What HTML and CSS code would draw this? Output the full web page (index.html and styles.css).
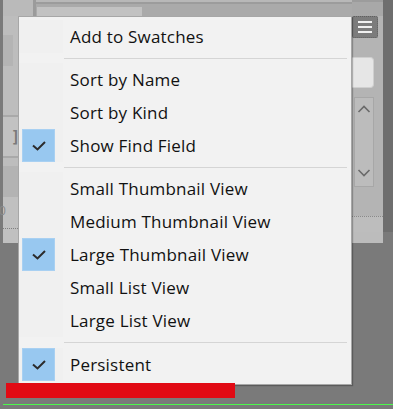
FILE: index.html
```html
<!DOCTYPE html>
<html>
<head>
<meta charset="utf-8">
<link rel="stylesheet" href="styles.css">
</head>
<body>
<div class="stage">
  <div class="backdrop">
    <div class="panel">
      <div class="panel-main">
        <div class="top">
          <div class="top-left"></div>
          <div class="top-vline"></div>
          <div class="top-right">
            <div class="topbar"></div>
            <div class="tabrow"><div class="tab"></div></div>
          </div>
        </div>
        <div class="field-row"><div class="stub"></div></div>
        <div class="list-row"><span class="bracket">]</span></div>
        <div class="grid-row"></div>
        <div class="grid-row2"></div>
        <div class="dotted"><span class="zero">0</span></div>
      </div>
      <div class="panel-side">
        <div class="side-top"></div>
        <div class="menu-btn"><span></span><span></span><span></span></div>
        <div class="search"></div>
        <div class="scroll">
          <svg class="chev" width="14" height="8" viewBox="0 0 14 8"><polyline points="1.5,7 7,1.5 12.5,7" fill="none" stroke="#6a6a6a" stroke-width="1.6"/></svg>
          <svg class="chev" width="14" height="8" viewBox="0 0 14 8"><polyline points="1.5,1 7,6.5 12.5,1" fill="none" stroke="#6a6a6a" stroke-width="1.6"/></svg>
        </div>
        <div class="side-dots"></div>
      </div>
    </div>
    <div class="edge"></div>
  </div>

  <div class="menu">
    <div class="item"><span class="gutter"></span><span class="label">Add to Swatches</span></div>
    <div class="sep"></div>
    <div class="item"><span class="gutter"></span><span class="label">Sort by Name</span></div>
    <div class="item"><span class="gutter"></span><span class="label">Sort by Kind</span></div>
    <div class="item"><span class="gutter"><span class="check"><svg width="16" height="12" viewBox="0 0 16 12"><polyline points="2,5.5 6.5,9.5 14,2" fill="none" stroke="#2b2b2b" stroke-width="2"/></svg></span></span><span class="label">Show Find Field</span></div>
    <div class="sep"></div>
    <div class="item"><span class="gutter"></span><span class="label">Small Thumbnail View</span></div>
    <div class="item"><span class="gutter"></span><span class="label">Medium Thumbnail View</span></div>
    <div class="item"><span class="gutter"><span class="check"><svg width="16" height="12" viewBox="0 0 16 12"><polyline points="2,5.5 6.5,9.5 14,2" fill="none" stroke="#2b2b2b" stroke-width="2"/></svg></span></span><span class="label">Large Thumbnail View</span></div>
    <div class="item"><span class="gutter"></span><span class="label">Small List View</span></div>
    <div class="item"><span class="gutter"></span><span class="label">Large List View</span></div>
    <div class="sep sep-last"></div>
    <div class="item"><span class="gutter"><span class="check"><svg width="16" height="12" viewBox="0 0 16 12"><polyline points="2,5.5 6.5,9.5 14,2" fill="none" stroke="#2b2b2b" stroke-width="2"/></svg></span></span><span class="label">Persistent</span></div>
  </div>

  <div class="redbar"></div>
  <div class="greenline"></div>
</div>
</body>
</html>
```
FILE: styles.css
```css
html, body {
  margin: 0;
  padding: 0;
}
body {
  background: #7a7a7a;
  font-family: "Open Sans", "Noto Sans", "Liberation Sans", sans-serif;
}
.stage {
  position: relative;
  width: 393px;
  height: 409px;
  overflow: hidden;
}
.backdrop {
  display: flex;
  height: 243px;
}
.panel {
  margin-left: 3px;
  width: 380px;
  display: flex;
  background: #bcbcbc;
}
.edge {
  flex: 1;
  background: #6e6e6e;
  height: 232px;
}
.panel-main {
  flex: 1;
  display: flex;
  flex-direction: column;
}
.top {
  display: flex;
  height: 16px;
}
.top-left {
  width: 30px;
  background: #bababa;
}
.top-vline {
  width: 3px;
  background: #9b9b9b;
}
.top-right {
  flex: 1;
  display: flex;
  flex-direction: column;
}
.topbar {
  height: 2px;
  background: #b8b8b8;
  border-bottom: 2px solid #9c9c9c;
}
.tabrow {
  flex: 1;
  display: flex;
  padding-left: 1px;
  background: #aaaaaa;
}
.tab {
  width: 105px;
  background: #c2c2c2;
  margin-top: 3px;
}
.field-row {
  height: 99px;
  background: #bdbdbd;
}
.stub {
  margin: 19px 0 0 0;
  width: 10px;
  height: 31px;
  background: #b4b4b4;
}
.list-row {
  height: 39px;
  border-top: 2px solid #a9a9a9;
  border-bottom: 2px solid #a9a9a9;
  display: flex;
  align-items: center;
  padding-left: 8px;
  background: #c2c2c2;
}
.bracket {
  font-family: "DejaVu Sans Mono", monospace;
  font-size: 15px;
  color: #7a7a7a;
  font-weight: bold;
}
.grid-row {
  height: 8px;
  background: #bdbdbd;
}
.grid-row2 {
  height: 31px;
  background: #b3b3b3;
}
.dotted {
  flex: 1;
  background: #c0c0c0;
  display: flex;
  flex-direction: column;
}
.zero {
  font-size: 12px;
  line-height: 14px;
  color: #8a8a8a;
  margin: 7px 0 0 -4px;
}
.dotted::after {
  content: "";
  margin-top: 10px;
  border-top: 1px dotted #808080;
}
.panel-side {
  width: 31px;
  display: flex;
  flex-direction: column;
  background: #b4b4b4;
  height: 232px;
}
.side-top {
  height: 16px;
  background: #a8a8a8;
  border-top: 2px solid #9c9c9c;
  box-sizing: border-box;
}
.menu-btn {
  width: 26px;
  height: 22px;
  box-sizing: border-box;
  background: #7c7c7c;
  border: 1px dotted #5f5f5f;
  border-radius: 2px;
  display: flex;
  flex-direction: column;
  justify-content: center;
  align-items: center;
  gap: 3px;
}
.menu-btn span {
  width: 14px;
  height: 2px;
  background: #f0f0f0;
}
.search {
  margin-top: 19px;
  width: 21px;
  height: 29px;
  background: #e6e6e6;
  border-radius: 0 4px 4px 0;
  border: 1px solid #cfcfcf;
  border-left: none;
}
.scroll {
  margin: 9px 0 0 2px;
  width: 20px;
  height: 90px;
  box-sizing: border-box;
  border: 1px solid #a7a7a7;
  background: #bcbcbc;
  display: flex;
  flex-direction: column;
  justify-content: space-between;
  align-items: center;
  padding: 7px 0 9px;
}
.chev {
  display: block;
}
.side-dots {
  margin-top: 29px;
  border-top: 1px dotted #8a8a8a;
  flex: 1;
  background: #bdbdbd;
}

.menu {
  position: absolute;
  left: 18px;
  top: 16px;
  width: 334px;
  box-sizing: border-box;
  background: #f2f2f2;
  border: 1px solid #a7a7a7;
  box-shadow: 1px 1px 1px rgba(0,0,0,0.25);
  padding: 3px 0 3px;
}
.item {
  display: flex;
  align-items: center;
  height: 33px;
}
.gutter {
  width: 44px;
  height: 33px;
  box-sizing: border-box;
  padding-left: 3px;
  background: #f0f0f0;
  display: flex;
}
.check {
  width: 33px;
  height: 33px;
  box-sizing: border-box;
  background: #98c8f0;
  border: 1px solid #a8d0f2;
  display: flex;
  align-items: center;
  justify-content: center;
}
.label {
  padding-left: 7px;
  font-size: 17px;
  letter-spacing: 0.2px;
  color: #111;
}
.sep {
  height: 10px;
  margin-left: 45px;
  margin-right: 4px;
  display: flex;
  align-items: center;
}
.sep::after {
  content: "";
  flex: 1;
  height: 1px;
  background: #d5d5d5;
}
.sep-last {
  height: 11px;
}
.redbar {
  position: absolute;
  left: 6px;
  top: 383px;
  width: 229px;
  height: 15px;
  background: #e10a14;
}
.greenline {
  position: absolute;
  left: 3px;
  top: 404px;
  width: 390px;
  height: 1px;
  background: #4cf84c;
}
```
